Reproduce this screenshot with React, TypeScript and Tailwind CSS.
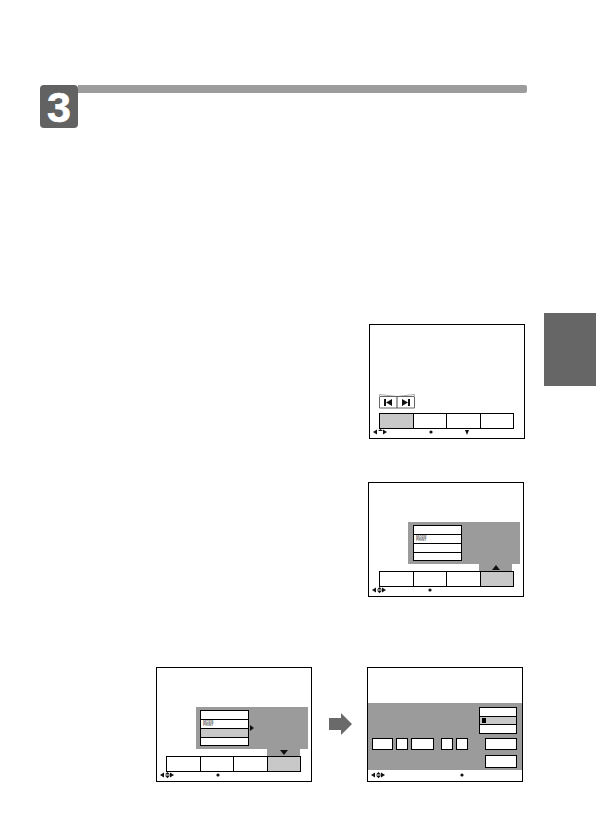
const TAB_LABELS = [0, 1, 2, 3];

function TabBar({ active }: { active: number }) {
  return (
    <div className="flex h-[16px] w-[135px] border border-black">
      {TAB_LABELS.map((i) => (
        <div
          key={i}
          className={`flex-1 border-black ${i > 0 ? "border-l" : ""} ${i === active ? "bg-[#c8c8c8]" : "bg-white"}`}
        />
      ))}
    </div>
  );
}

// the little arrow legend under each screen
function Legend({ dotX, downX, updown = true }: { dotX: number; downX?: number; updown?: boolean }) {
  return (
    <svg width="154" height="8" viewBox="0 1 154 8" className="block" fill="#111">
      <path d="M3 4l4-2.5v5z" />
      <path d="M17 4l-4-2.5v5z" />
      {updown ? (
        <>
          <path d="M8 3.6l2.5-2.6L13 3.6z" />
          <path d="M8 4.6L10.5 7.2 13 4.6z" />
        </>
      ) : (
        <path d="M8 3l2.5-2L13 3z" />
      )}
      <circle cx={dotX} cy="4" r="1.6" />
      {downX !== undefined && <path d={`M${downX - 2} 2h4l-2 5z`} />}
    </svg>
  );
}

function MenuList({ selected }: { selected?: number }) {
  return (
    <div className="flex h-[36px] w-[49px] flex-col border border-black bg-white">
      <div className="h-[8px]" />
      <div className="flex h-[9px] flex-col justify-center border-t border-black pl-[2px] text-[3.5px] font-bold leading-[3px] text-[#666]">
        <span>MODE</span>
        <span>PRINT</span>
      </div>
      <div className={`h-[9px] border-t border-black ${selected === 2 ? "bg-[#c8c8c8]" : ""}`} />
      <div className="flex-1 border-t border-black" />
    </div>
  );
}

function ScreenBox({ children }: { children: React.ReactNode }) {
  return <div className="flex h-[115px] w-[156px] shrink-0 flex-col border border-black bg-white">{children}</div>;
}

function MenuScreen({ up, selected }: { up: boolean; selected?: number }) {
  const isDown = selected !== undefined;
  return (
    <ScreenBox>
      <div className={`ml-[39px] mt-[39px] flex h-[42px] w-[112px] items-center bg-[#9b9b9b] ${isDown ? "pl-[4px]" : "pl-[5px]"}`}>
        <MenuList selected={selected} />
        {isDown && (
          <svg width="4" height="6" viewBox="0 0 4 6" className="ml-[1px]" fill="#111">
            <path d="M0 0l4 3-4 3z" />
          </svg>
        )}
      </div>
      <div className="ml-[110px] flex h-[7px] w-[33px] items-center justify-center bg-[#9b9b9b]">
        <svg width="8" height="5" viewBox="0 0 8 5" fill="#111">
          <path d={up ? "M4 0l4 5H0z" : "M0 0h8L4 5z"} />
        </svg>
      </div>
      <div className={isDown ? "ml-[9px]" : "ml-[10px]"}>
        <TabBar active={3} />
      </div>
      <Legend dotX={61} />
    </ScreenBox>
  );
}

function SkipButtons() {
  return (
    <svg width="36" height="15" viewBox="0 0 36 15" className="ml-[9px] block">
      <path d="M0.5 0.5L18 2.5L35.5 0.5" fill="none" stroke="#aaa" />
      <path d="M0.5 2.5H35.5V14H0.5Z" fill="#fff" stroke="#666" />
      <path d="M0.5 0.5V3M35.5 0.5V3" stroke="#aaa" />
      <path d="M18 2V14" stroke="#444" />
      <path d="M5 5h2v7H5zM7 8.5L13 5v7zM29 5h2v7h-2zM29 8.5L23 5v7z" fill="#111" />
    </svg>
  );
}

function DateBox({ width }: { width: string }) {
  return <div className={`h-[12px] border border-black bg-white ${width}`} />;
}

export default function App() {
  return (
    <div className="relative h-[840px] w-[596px] overflow-hidden bg-white pt-[85px] font-['Liberation_Sans',sans-serif]">
      <div className="absolute right-0 top-[313px] h-[73px] w-[52px] bg-[#666666]" />

      <header className="ml-[40px] flex w-[487px] items-start">
        <div className="flex h-[43px] w-[38px] items-center justify-center rounded-[4px] bg-[#626262] pt-[2px] text-[43px] font-bold leading-none text-white [-webkit-text-stroke:0.6px_white]">
          3
        </div>
        <div className="h-[8px] flex-1 rounded-r-[2px] bg-[#9c9c9c]" />
      </header>

      <div className="ml-[369px] mt-[196px]">
        <ScreenBox>
          <div className="mt-[69px]">
            <SkipButtons />
          </div>
          <div className="ml-[9px] mt-[4px]">
            <TabBar active={0} />
          </div>
          <Legend dotX={61} downX={97} updown={false} />
        </ScreenBox>
      </div>

      <div className="ml-[368px] mt-[43px]">
        <MenuScreen up />
      </div>

      <div className="ml-[156px] mt-[70px] flex items-start">
        <MenuScreen up={false} selected={2} />
        <svg width="23" height="22" viewBox="0 0 23 22" className="ml-[17px] mt-[46px] shrink-0" fill="#6a6a6a">
          <path d="M0 5h12V0l11 11-11 11v-5H0z" />
        </svg>
        <div className="ml-[15px]">
          <ScreenBox>
            <div className="mt-[35px] flex h-[67px] flex-col bg-[#9b9b9b] pb-[2px] pr-[5px] pt-[4px]">
              <div className="ml-auto flex h-[27px] w-[38px] flex-col border border-black bg-white">
                <div className="h-[8px]" />
                <div className="flex h-[9px] items-center border-y border-black bg-[#c8c8c8] pl-[2px]">
                  <div className="h-[5px] w-[4px] bg-black" />
                </div>
              </div>
              <div className="mt-[4px] flex h-[12px] items-start pl-[4px]">
                <DateBox width="w-[21px]" />
                <div className="ml-[3px]">
                  <DateBox width="w-[12px]" />
                </div>
                <div className="ml-[3px]">
                  <DateBox width="w-[23px]" />
                </div>
                <div className="ml-[7px]">
                  <DateBox width="w-[12px]" />
                </div>
                <div className="ml-[3px]">
                  <DateBox width="w-[12px]" />
                </div>
                <div className="ml-auto">
                  <DateBox width="w-[32px]" />
                </div>
              </div>
              <div className="ml-auto mt-auto h-[13px] w-[32px] border border-black bg-white" />
            </div>
            <div className="mt-[2px]">
              <Legend dotX={94} />
            </div>
          </ScreenBox>
        </div>
      </div>
    </div>
  );
}
